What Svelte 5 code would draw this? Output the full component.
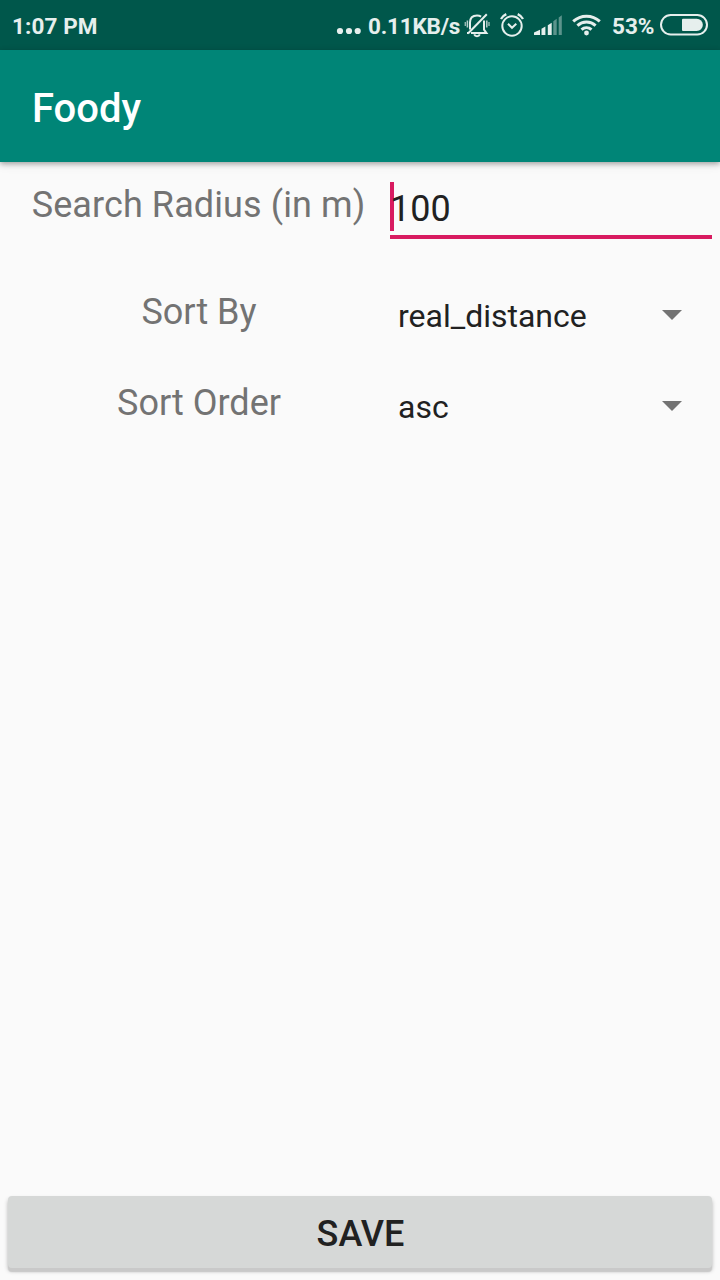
<script>
  let radius = $state('100');
  const selects = [
    { label: 'Sort By', value: 'real_distance' },
    { label: 'Sort Order', value: 'asc' }
  ];
</script>

<div class="screen">
  <header class="status">
    <span class="time">1:07 PM</span>
    <svg class="dots" width="26" height="8" viewBox="0 0 26 8" fill="currentColor">
      <circle cx="4" cy="4" r="3.1" /><circle cx="13" cy="4" r="3.1" /><circle cx="21.7" cy="4" r="3.1" />
    </svg>
    <span class="speed">0.11KB/s</span>
    <svg class="bell" width="26" height="26" viewBox="0 0 26 26" fill="none" stroke="currentColor" stroke-width="2">
      <path d="M6 17.5V10.5C6 6 8.7 3.5 13 3.5c1.6 0 3 .4 4.1 1.1M20 8.5v9.2l2.4 3.2H7M3 20.9h1.2" />
      <path d="M22.8 2.2 4 21.5" />
      <path d="M10.2 22.4c.5 1.2 1.5 1.8 2.8 1.8s2.3-.6 2.8-1.8" />
      <path d="M3.4 8.5v7M22.8 8.5v7" stroke-width="1.5" opacity=".8" />
      <path d="M1.3 10v4M25 10v4" stroke-width="1.4" opacity=".65" />
    </svg>
    <svg class="alarm" width="26" height="26" viewBox="0 0 26 26" fill="none" stroke="currentColor" stroke-width="2">
      <circle cx="13" cy="14" r="9.7" />
      <path d="m9 11.8 4 4 4.3-4" />
      <path d="M2 7C3.2 4.8 5 3.2 7.3 2.1M24 7c-1.2-2.2-3-3.8-5.3-4.9" stroke-width="2.3" />
    </svg>
    <svg class="signal" width="29" height="21" viewBox="0 0 29 21" fill="currentColor">
      <path d="m0 17.4 6-2.6V20H0z" />
      <path d="m7.5 13.8 3.9-2.2V20H7.5z" />
      <path d="m13.8 10.2 3.9-2.5V20h-3.9z" />
      <path d="m19.3 6.2 3.4-2.5V20h-3.4zM24.7 2.4 27.8.2V20h-3.1z" opacity=".4" />
    </svg>
    <svg class="wifi" width="29" height="22" viewBox="0 0 29 22" fill="none" stroke="currentColor" stroke-width="3">
      <path d="M1.2 7.4c7.6-6.9 19-6.9 26.6 0M5.4 11.6c5.2-4.7 13-4.7 18.2 0M9.5 15.6c2.9-2.6 7.1-2.6 10 0" />
      <circle cx="14.5" cy="19" r="2.4" fill="currentColor" stroke="none" />
    </svg>
    <span class="percent">53%</span>
    <svg class="battery" width="48" height="22" viewBox="0 0 48 22" fill="none">
      <rect x="1" y="1" width="46" height="19.5" rx="9.75" stroke="currentColor" stroke-width="2" />
      <path d="M23 4.7h13.7a6.15 6.15 0 0 1 0 12.3H23a1 1 0 0 1-1-1V5.7a1 1 0 0 1 1-1z" fill="currentColor" />
    </svg>
  </header>

  <div class="appbar"><h1>Foody</h1></div>

  <main>
    <div class="row first">
      <label for="radius">Search Radius (in m)</label>
      <div class="field">
        <i class="caret"></i>
        <input id="radius" type="text" bind:value={radius} />
      </div>
    </div>
    {#each selects as item}
      <div class="row">
        <span class="label">{item.label}</span>
        <div class="spinner">
          <span>{item.value}</span>
          <svg width="20" height="10" viewBox="0 0 20 10"><path d="M0 0h20L10 10z" fill="#737373" /></svg>
        </div>
      </div>
    {/each}
  </main>

  <button type="button">SAVE</button>
</div>

<style>
  :global(body) { margin: 0; }
  .screen {
    box-sizing: border-box;
    width: 720px;
    height: 1280px;
    display: flex;
    flex-direction: column;
    overflow: hidden;
    background: #fafafa;
    font-family: Roboto, sans-serif;
  }
  .status {
    height: 50px;
    flex: none;
    display: flex;
    align-items: flex-start;
    background: #00574b;
    color: #e6efed;
    font-size: 22.5px;
    font-weight: 700;
    line-height: 27px;
    white-space: nowrap;
  }
  .status svg { flex: none; }
  .status span { margin-top: 13px; flex: none; }
  .time { width: 324px; padding-left: 12px; letter-spacing: .1px; }
  .dots { margin-top: 27px; }
  .speed { width: 96px; margin-left: 6px; letter-spacing: -.2px; }
  .bell { margin-top: 12px; }
  .alarm { margin: 12px 0 0 9px; }
  .signal { margin: 15px 0 0 9px; }
  .wifi { margin: 14px 0 0 9px; }
  .percent { width: 42px; margin-left: 11px; }
  .battery { margin: 14px 0 0 6px; }
  .appbar {
    position: relative;
    height: 112px;
    flex: none;
    display: flex;
    align-items: center;
    padding: 0 32px;
    background: #008577;
    box-shadow: 0 2px 5px rgba(0, 0, 0, .3), 0 3px 10px rgba(0, 0, 0, .08);
  }
  h1 {
    margin: 6px 0 0;
    color: #fff;
    font-size: 40px;
    font-weight: 500;
    line-height: 48px;
  }
  main { flex: 1; }
  .row {
    display: grid;
    grid-template-columns: 334px 322px;
    column-gap: 24px;
    height: 91px;
    padding-left: 32px;
    box-sizing: border-box;
    align-items: start;
  }
  .row.first { height: 107px; }
  label, .label {
    margin-top: 22px;
    color: #737373;
    font-size: 36px;
    line-height: 42px;
    text-align: center;
    white-space: nowrap;
  }
  label { letter-spacing: .1px; margin-left: -1px; }
  .field {
    position: relative;
    box-sizing: border-box;
    height: 77px;
    padding-top: 26px;
    border-bottom: 4px solid #d81b60;
  }
  .caret {
    position: absolute;
    left: 0;
    top: 20px;
    width: 4px;
    height: 49px;
    background: #d81b60;
  }
  input {
    position: relative;
    display: block;
    width: 100%;
    height: 42px;
    padding: 0;
    border: 0;
    outline: 0;
    background: transparent;
    color: #212121;
    font: 400 36px/42px Roboto, sans-serif;
  }
  .spinner {
    display: flex;
    align-items: center;
    justify-content: space-between;
    height: 38px;
    margin-top: 28px;
    padding: 0 30px 0 8px;
    color: #212121;
    font-size: 32px;
    line-height: 38px;
  }
  .spinner svg { margin-bottom: 2px; }
  button {
    height: 72px;
    flex: none;
    margin: 0 8px 12px;
    padding: 4px 0 0 1px;
    border: 0;
    border-radius: 4px;
    background: #d6d8d7;
    color: #212121;
    font: 500 36px/42px Roboto, sans-serif;
    box-shadow: 0 4px 1px #c9c9c9, 0 3px 4px rgba(0, 0, 0, .28);
  }
</style>
